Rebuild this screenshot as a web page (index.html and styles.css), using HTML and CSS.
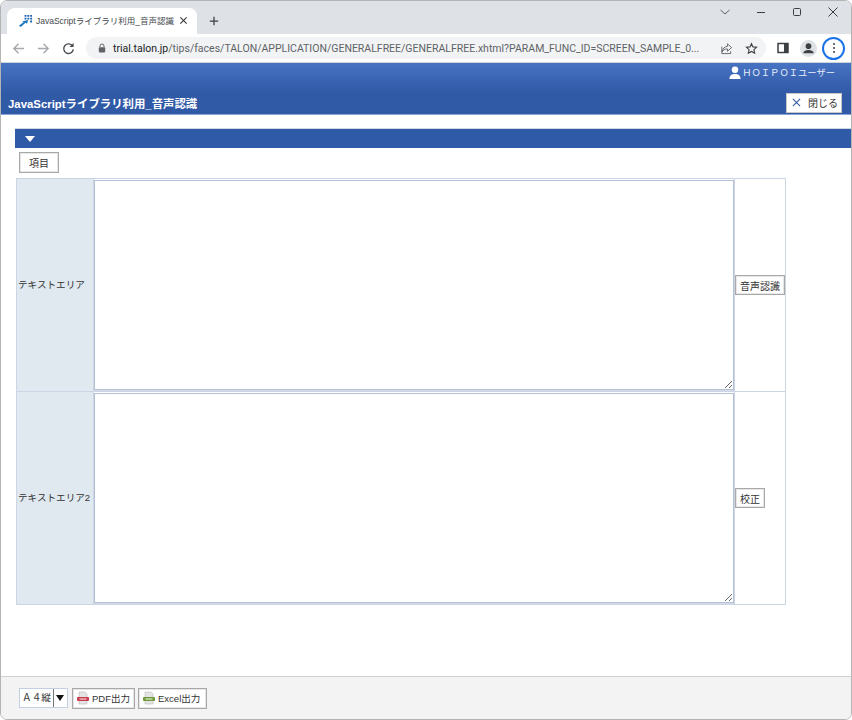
FILE: index.html
```html
<!DOCTYPE html>
<html lang="ja">
<head>
<meta charset="utf-8">
<title>JavaScriptライブラリ利用_音声認識</title>
<link rel="stylesheet" href="styles.css">
</head>
<body>
<div class="window">
  <div class="tabstrip">
    <div class="tab">
      <svg class="favicon" viewBox="0 0 16 16"><path d="M1 13.500L6 9.500 4.500 8.800 11 7.500 9.500 11.500 8 10.500 3 15z" fill="#1f7ac0"/><path d="M7 2h2v2H7zM10 2h2v2h-2zM13 2h2v2h-2zM7 5h2v2H7zM10 5h2v2h-2zM13 5h2v2h-2zM13 8h2v2h-2z" fill="#1a62ad"/></svg>
      <span class="tab-title">JavaScriptライブラリ利用_音声認識</span>
      <svg class="tab-close" viewBox="0 0 10 10"><path d="M1.500 1.500l7 7M8.500 1.500l-7 7" stroke="#3c4043" stroke-width="1.300" fill="none"/></svg>
    </div>
    <svg class="newtab" viewBox="0 0 12 12"><path d="M6 1v10M1 6h10" stroke="#3c4043" stroke-width="1.500" fill="none"/></svg>
    <div class="winctrls">
      <svg class="winicon" viewBox="0 0 12 12"><path d="M1.500 4L6 8l4.500-4" stroke="#5f6368" stroke-width="1" fill="none"/></svg>
      <svg class="winicon" viewBox="0 0 12 12"><path d="M2 6.500h8" stroke="#3c4043" stroke-width="1" fill="none"/></svg>
      <svg class="winicon" viewBox="0 0 12 12"><rect x="2.500" y="2.500" width="7" height="7" rx="1" stroke="#3c4043" stroke-width="1" fill="none"/></svg>
      <svg class="winicon" viewBox="0 0 12 12"><path d="M1.500 1.500l9 9M10.500 1.500l-9 9" stroke="#3c4043" stroke-width="1" fill="none"/></svg>
    </div>
  </div>
  <div class="toolbar">
    <svg class="navicon" viewBox="0 0 14 14"><path d="M13 7H2M7 2L2 7l5 5" stroke="#a6a9ad" stroke-width="1.500" fill="none"/></svg>
    <svg class="navicon" viewBox="0 0 14 14"><path d="M1 7h11M7 2l5 5-5 5" stroke="#a6a9ad" stroke-width="1.500" fill="none"/></svg>
    <svg class="navicon" viewBox="0 0 14 14"><path d="M11.500 4.500A5.200 5.200 0 1 0 12.200 8" stroke="#494c50" stroke-width="1.500" fill="none"/><path d="M12.500 1v4.500H8z" fill="#494c50"/></svg>
    <div class="omnibox">
      <svg class="lock" viewBox="0 0 10 12"><path d="M2.500 5V3.500a2.500 2.500 0 0 1 5 0V5" stroke="#5f6368" stroke-width="1.200" fill="none"/><rect x="1" y="5" width="8" height="6.500" rx="1" fill="#5f6368"/></svg>
      <span class="url"><span class="url-host">trial.talon.jp</span>/tips/faces/TALON/APPLICATION/GENERALFREE/GENERALFREE.xhtml?PARAM_FUNC_ID=SCREEN_SAMPLE_0...</span>
      <svg class="omniicon" viewBox="0 0 14 14"><path d="M8 2l4.500 4L8 10V7.500C5 7.500 3.500 8.500 2.500 10.500 2.800 7 5 5 8 4.700z M2 5v7.500h9.500V10" stroke="#5f6368" stroke-width="1" fill="none"/></svg>
      <svg class="omniicon" viewBox="0 0 14 14"><path d="M7 1.800l1.600 3.500 3.800.4-2.800 2.600.8 3.800L7 10.200l-3.400 1.900.8-3.800L1.600 5.700l3.800-.4z" stroke="#3c4043" stroke-width="1.200" fill="none"/></svg>
    </div>
    <svg class="sidepanel" viewBox="0 0 12 12"><rect x="1" y="1.500" width="10" height="9" stroke="#3c4043" stroke-width="1.500" fill="none"/><rect x="7" y="1.500" width="4" height="9" fill="#3c4043"/></svg>
    <div class="avatar"><svg viewBox="0 0 18 18"><circle cx="9" cy="6.500" r="3" fill="#3c4043"/><path d="M3.500 14c0-2.500 3-3.500 5.500-3.500s5.500 1 5.500 3.500z" fill="#3c4043"/></svg></div>
    <div class="menu-btn"><span class="dot"></span><span class="dot"></span><span class="dot"></span></div>
  </div>
  <div class="page">
    <header class="app-header">
      <div class="user-row">
        <svg class="user-icon" viewBox="0 0 12 14"><circle cx="6" cy="4" r="3.500" fill="#fff"/><path d="M0 14c0-4 2.500-5 4.500-5.500h3C9.500 9 12 10 12 14z" fill="#fff"/></svg>
        <span class="user-name">ＨＯＩＰＯＩユーザー</span>
      </div>
      <div class="title-row">
        <span class="app-title">JavaScriptライブラリ利用_音声認識</span>
        <button class="close-btn"><svg viewBox="0 0 10 10"><path d="M1 1l8 8M9 1l-8 8" stroke="#2f5aa8" stroke-width="1.200" fill="none"/></svg>閉じる</button>
      </div>
    </header>
    <main class="content">
      <div class="section-bar"><span class="triangle"></span></div>
      <button class="btn item-btn">項目</button>
      <table class="form-table">
        <tr>
          <th>テキストエリア</th>
          <td class="area-cell"><textarea></textarea></td>
          <td class="action-cell"><button class="btn">音声認識</button></td>
        </tr>
        <tr>
          <th>テキストエリア2</th>
          <td class="area-cell"><textarea></textarea></td>
          <td class="action-cell"><button class="btn">校正</button></td>
        </tr>
      </table>
    </main>
    <footer class="footer">
      <div class="select"><span class="select-value">Ａ４縦</span><span class="select-arrow"></span></div>
      <button class="btn out-btn"><svg viewBox="0 0 14 14"><path d="M3 1h6l2 2v10H3z" fill="#e4e4e4" stroke="#bbb" stroke-width=".6"/><rect x="1" y="6" width="12" height="4" rx="1" fill="#c83c4c"/><rect x="3.500" y="7.400" width="7" height="1.200" fill="#f4d5d8"/></svg>PDF出力</button>
      <button class="btn out-btn"><svg viewBox="0 0 14 14"><path d="M3 1h6l2 2v10H3z" fill="#e4e4e4" stroke="#bbb" stroke-width=".6"/><rect x="1" y="6" width="12" height="4" rx="1" fill="#6f9a3c"/><rect x="3.500" y="7.400" width="7" height="1.200" fill="#e0ecd0"/></svg>Excel出力</button>
    </footer>
  </div>
</div>
</body>
</html>
```
FILE: styles.css
```css
* { box-sizing: border-box; }
html, body { margin: 0; height: 720px; overflow: hidden; background: #fff; }
body { font-family: "Liberation Sans", "Noto Sans CJK JP", sans-serif; font-size: 10px; color: #333; }
.window { width: 852px; height: 720px; display: flex; flex-direction: column; border: 1px solid #b4b4b4; border-radius: 7px; overflow: hidden; }

.tabstrip { height: 33px; flex: none; background: #dee1e6; display: flex; align-items: flex-end; padding-left: 6px; position: relative; }
.tab { width: 190px; height: 26px; background: #fff; border-radius: 8px 8px 0 0; display: flex; align-items: center; padding: 0 9px 2px 11px; }
.favicon { width: 15px; height: 15px; flex: none; margin-right: 3px; }
.tab-title { font-size: 8.500px; color: #45494e; white-space: nowrap; flex: 1; }
.tab-close { width: 9px; height: 9px; flex: none; margin-left: 4px; }
.newtab { width: 10px; height: 10px; margin: 0 0 8px 12px; flex: none; }
.winctrls { position: absolute; right: 0; top: 5px; display: flex; }
.winicon { width: 12px; height: 12px; margin-right: 24px; }
.winicon:last-child { margin-right: 12px; }

.toolbar { height: 29px; flex: none; background: #fff; border-bottom: 1px solid #d0d3d7; display: flex; align-items: center; padding-left: 11px; }
.navicon { width: 13px; height: 13px; margin-right: 12px; flex: none; }
.navicon:nth-of-type(3) { margin-right: 11px; }
.omnibox { width: 680px; height: 22px; border-radius: 11px; background: #f1f3f4; display: flex; align-items: center; padding: 0 8px 0 12px; flex: none; }
.lock { width: 8px; height: 10px; flex: none; margin-right: 7px; }
.url { font-family: Roboto, sans-serif; font-size: 10.500px; color: #5f6368; white-space: nowrap; flex: 1; min-width: 0; }
.url-host { color: #202124; }
.omniicon { width: 13px; height: 13px; flex: none; margin-left: 12px; }
.sidepanel { width: 12px; height: 12px; margin-left: 11px; flex: none; }
.avatar { width: 17px; height: 17px; border-radius: 50%; background: #dee1e6; margin-left: 11px; flex: none; }
.avatar svg { display: block; width: 17px; height: 17px; }
.menu-btn { width: 23px; height: 23px; border: 2px solid #1a73e8; border-radius: 50%; margin-left: 5px; flex: none; display: flex; flex-direction: column; align-items: center; justify-content: center; gap: 2px; }
.dot { width: 2px; height: 2px; background: #3c4043; border-radius: 50%; }

.page { flex: 1; min-height: 0; display: flex; flex-direction: column; }
.app-header { height: 52px; flex: none; background: linear-gradient(#4773c3, #3059a6 60%, #3059a6); border-bottom: 1px solid #8aa5d8; color: #fff; }
.user-row { height: 18px; display: flex; align-items: center; justify-content: flex-end; padding-right: 16px; }
.user-icon { width: 12px; height: 13px; margin-right: 1px; }
.user-name { font-size: 9.300px; color: #e8eefa; white-space: nowrap; }
.title-row { height: 33px; padding: 10px 9px 0 7px; display: flex; align-items: center; justify-content: space-between; }
.app-title { font-size: 11.400px; font-weight: bold; color: #fff; white-space: nowrap; }
.close-btn { width: 56px; height: 20px; background: #fff; border: 1px solid #c8c8c8; font: inherit; font-size: 10px; color: #333; display: flex; align-items: center; padding: 0 0 0 5px; margin: 0; }
.close-btn svg { width: 9px; height: 9px; margin-right: 7px; }

.content { flex: 1; min-height: 0; padding: 13px 0 0 14px; }
.section-bar { height: 20px; background: #2f5aa8; border-top: 1px solid #d0d8e8; padding-left: 10px; display: flex; align-items: center; }
.triangle { width: 0; height: 0; border-left: 5px solid transparent; border-right: 5px solid transparent; border-top: 6px solid #fff; }
.btn { background: #fff; border: 1px solid #a8a8a8; box-shadow: 0 0 0 1px #e6e6e6 inset; font: inherit; font-size: 10px; color: #333; height: 20px; padding: 0 4px; margin: 0; }
.item-btn { width: 40px; height: 21px; display: block; margin: 4px 0 5px 4px; }

.form-table { border-collapse: collapse; table-layout: fixed; width: 769px; margin-left: 1px; }
.form-table th, .form-table td { border: 1px solid #ccd5e3; padding: 0; height: 213px; }
.form-table th { width: 77px; background: #e0e8f0; font-weight: normal; font-size: 9.600px; color: #333; text-align: left; padding: 0 0 2px 1px; white-space: nowrap; }
.area-cell { width: 641px; }
.action-cell { width: 51px; }
.form-table .area-cell { border-left-color: #eef1f6; }
.form-table textarea { display: block; width: 640px; height: 210px; border: 1px solid #b4c0d4; border-radius: 0; background: #fff; resize: both; outline: none; box-shadow: 1px 0 0 #ccd5e3, 0 2px 0 #d4dbe6; }

.footer { height: 43px; flex: none; background: #f3f3f3; border-top: 1px solid #d0d0d0; display: flex; align-items: center; padding: 0 0 0 18px; gap: 4px; }
.select { width: 49px; height: 20px; display: flex; background: #fff; border: 1px solid #c3cfe2; }
.select-value { flex: 1; font-size: 9.600px; line-height: 18px; text-align: center; white-space: nowrap; }
.select-arrow { width: 14px; flex: none; background: #fff; border-left: 1px solid #777; position: relative; }
.select-arrow::after { content: ""; position: absolute; left: 2px; top: 6px; border-left: 4px solid transparent; border-right: 4px solid transparent; border-top: 6px solid #111; }
.out-btn { display: flex; align-items: center; padding: 0 4px 0 3px; white-space: nowrap; height: 21px; font-size: 9.500px; }
.out-btn svg { width: 14px; height: 14px; margin-right: 2px; flex: none; }
.out-btn + .out-btn { margin-left: -1px; padding-right: 6px; }
```
